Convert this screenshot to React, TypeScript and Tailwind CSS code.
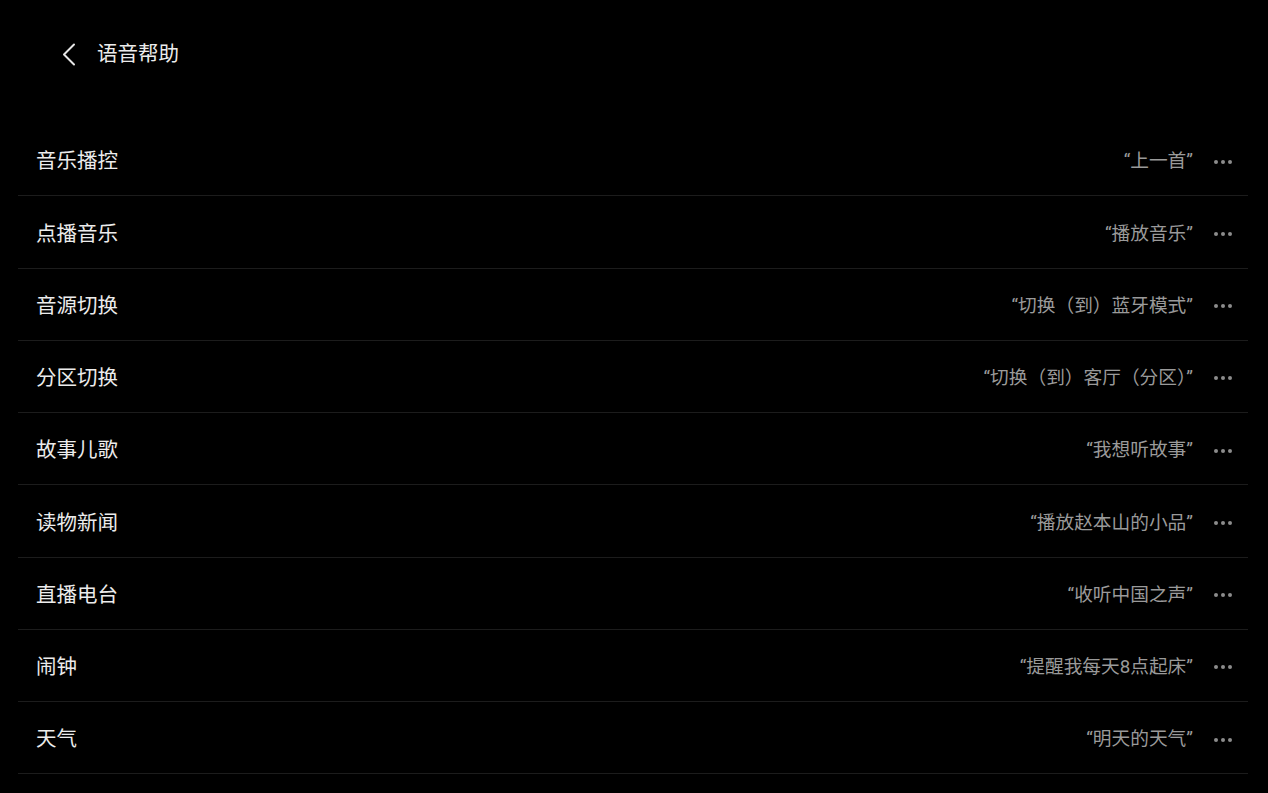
const rows = [
  { title: "音乐播控", hint: "“上一首”" },
  { title: "点播音乐", hint: "“播放音乐”" },
  { title: "音源切换", hint: "“切换（到）蓝牙模式”" },
  { title: "分区切换", hint: "“切换（到）客厅（分区）”" },
  { title: "故事儿歌", hint: "“我想听故事”" },
  { title: "读物新闻", hint: "“播放赵本山的小品”" },
  { title: "直播电台", hint: "“收听中国之声”" },
  { title: "闹钟", hint: "“提醒我每天8点起床”" },
  { title: "天气", hint: "“明天的天气”" },
]

function MoreDots() {
  return (
    <div className="flex items-center gap-[3px]">
      <span className="h-[4px] w-[4px] rounded-full bg-[#8c8c8c]" />
      <span className="h-[4px] w-[4px] rounded-full bg-[#8c8c8c]" />
      <span className="h-[4px] w-[4px] rounded-full bg-[#8c8c8c]" />
    </div>
  )
}

export default function App() {
  return (
    <div
      className="min-h-[793px] w-full bg-black"
      style={{ fontFamily: '"Roboto", "Noto Sans CJK SC", sans-serif' }}
    >
      <div className="flex h-[108px] items-center pl-[62px]">
        <svg width="14" height="23" viewBox="0 0 14 23" fill="none">
          <path
            d="M12 1.5L2 11.5L12 21.5"
            stroke="#e6e6e6"
            strokeWidth="2"
            strokeLinecap="round"
            strokeLinejoin="round"
          />
        </svg>
        <span className="ml-[21px] text-[20.5px] leading-none text-[#ececec]">
          语音帮助
        </span>
      </div>

      <div className="ml-[18px] mr-[20px] mt-[16px]">
        {rows.map(row => (
          <div
            key={row.title}
            className="flex h-[72.25px] items-center justify-between border-b border-[#1c1c1c] pl-[18px] pr-[16px] pt-[4px]"
          >
            <span className="text-[20.5px] leading-none text-[#ececec]">
              {row.title}
            </span>
            <div className="flex items-center">
              <span className="text-[18.7px] leading-none text-[#9a9a9a]">
                {row.hint}
              </span>
              <div className="ml-[21px]">
                <MoreDots />
              </div>
            </div>
          </div>
        ))}
      </div>
    </div>
  )
}
